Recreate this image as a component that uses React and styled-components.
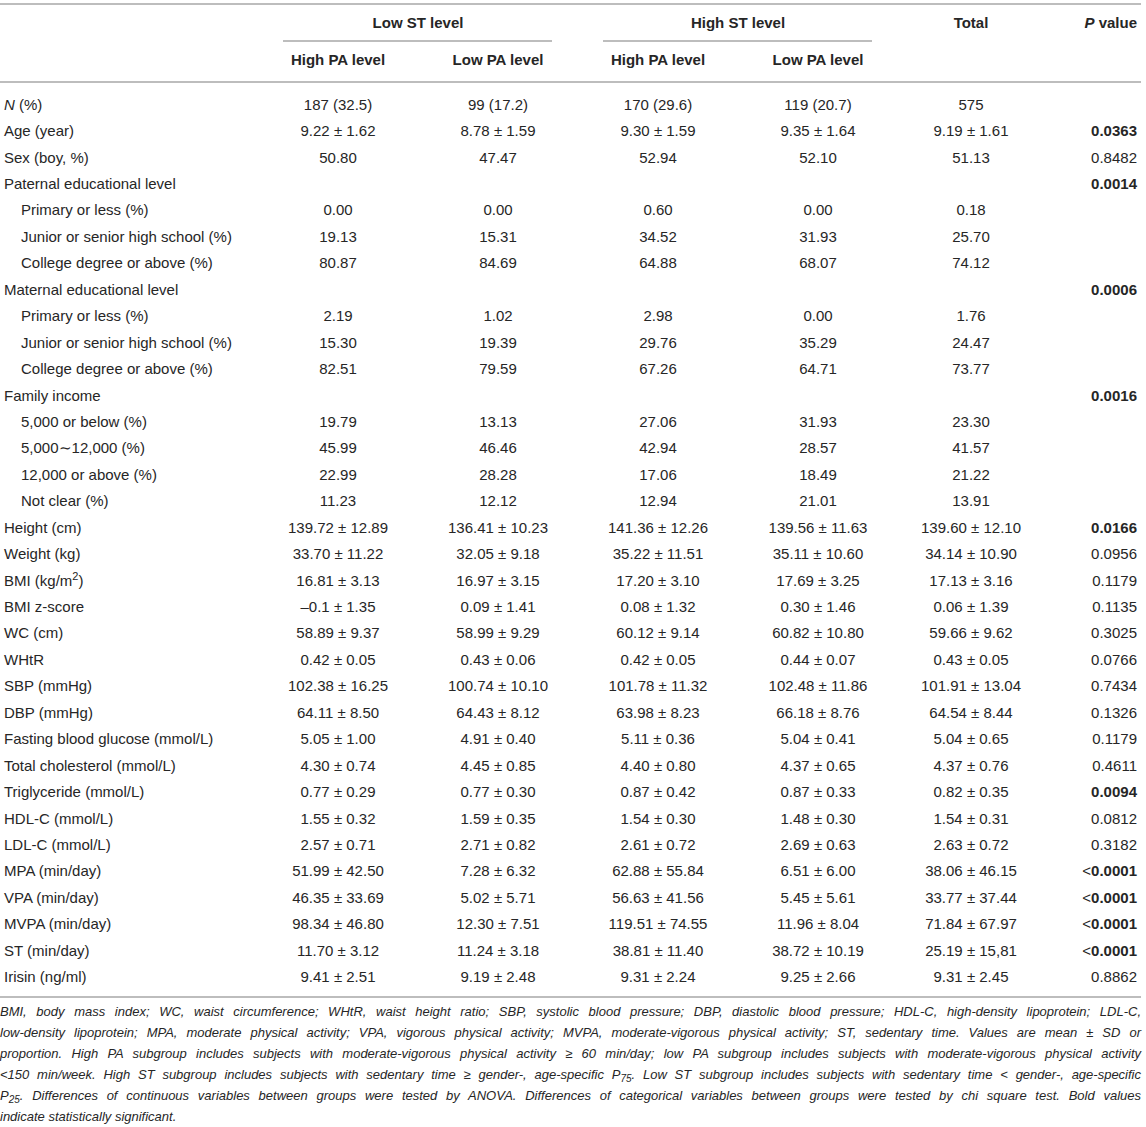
import React from 'react';
import styled, { createGlobalStyle } from 'styled-components';

const GlobalStyle = createGlobalStyle`
  body {
    margin: 0;
    background: #fff;
    color: #262626;
    font-family: "Liberation Sans", Arial, sans-serif;
  }
`;

const COLS = '258px 160px 160px 160px 160px 146px 97px';

const Page = styled.div`
  width: 1141px;
  padding-top: 3px;
`;

const Rule = styled.div`
  height: 2px;
  background: #bdbdbd;
`;

const Head = styled.div`
  display: grid;
  grid-template-columns: ${COLS};
  grid-template-rows: 35px 2px 39px;
  font-size: 15px;
  font-weight: bold;
`;

const GroupCell = styled.div`
  grid-column: ${(p) => p.$col} / span 2;
  grid-row: 1;
  display: flex;
  align-items: center;
  justify-content: center;
`;

const GroupLine = styled.div`
  grid-column: ${(p) => p.$col} / span 2;
  grid-row: 2;
  margin: 0 26px 0 25px;
  background: #bdbdbd;
`;

const SubHead = styled.div`
  grid-column: ${(p) => p.$col};
  grid-row: 3;
  padding-top: 10px;
  line-height: 16px;
  text-align: center;
`;

const TopHead = styled.div`
  grid-column: ${(p) => p.$col};
  grid-row: 1;
  display: flex;
  align-items: center;
  justify-content: ${(p) => (p.$right ? 'flex-end' : 'center')};
  padding-right: ${(p) => (p.$right ? '4px' : '0')};
`;

const Body = styled.div`
  padding: 8px 0 6px;
  font-size: 15px;
`;

const Row = styled.div`
  display: grid;
  grid-template-columns: ${COLS};
  height: 26.45px;
  align-items: center;
`;

const Label = styled.div`
  padding-left: ${(p) => (p.$indent ? '21px' : '4px')};
  white-space: nowrap;

  sup {
    font-size: 11px;
    line-height: 0;
  }
`;

const Cell = styled.div`
  text-align: center;
  white-space: nowrap;
`;

const PCell = styled.div`
  text-align: right;
  padding-right: 4px;
  white-space: nowrap;
  font-weight: ${(p) => (p.$bold ? 'bold' : 'normal')};
`;

const Lt = styled.span`
  font-weight: normal;
`;

const Notes = styled.div`
  padding-top: 3px;
  font-size: 13px;
  font-style: italic;
  line-height: 21px;
`;

const NoteLine = styled.div`
  height: 21px;
  text-align: justify;
  text-align-last: ${(p) => (p.$last ? 'left' : 'justify')};
  white-space: nowrap;

  sub {
    font-size: 10px;
    line-height: 0;
    vertical-align: -3px;
  }
`;

const pm = (a, b) => `${a} \u00b1 ${b}`;

const rows = [
  { label: <><i>N</i> (%)</>, vals: ['187 (32.5)', '99 (17.2)', '170 (29.6)', '119 (20.7)', '575'], p: '' },
  { label: 'Age (year)', vals: [pm('9.22', '1.62'), pm('8.78', '1.59'), pm('9.30', '1.59'), pm('9.35', '1.64'), pm('9.19', '1.61')], p: '0.0363', bold: true },
  { label: 'Sex (boy, %)', vals: ['50.80', '47.47', '52.94', '52.10', '51.13'], p: '0.8482' },
  { label: 'Paternal educational level', vals: ['', '', '', '', ''], p: '0.0014', bold: true },
  { label: 'Primary or less (%)', indent: true, vals: ['0.00', '0.00', '0.60', '0.00', '0.18'], p: '' },
  { label: 'Junior or senior high school (%)', indent: true, vals: ['19.13', '15.31', '34.52', '31.93', '25.70'], p: '' },
  { label: 'College degree or above (%)', indent: true, vals: ['80.87', '84.69', '64.88', '68.07', '74.12'], p: '' },
  { label: 'Maternal educational level', vals: ['', '', '', '', ''], p: '0.0006', bold: true },
  { label: 'Primary or less (%)', indent: true, vals: ['2.19', '1.02', '2.98', '0.00', '1.76'], p: '' },
  { label: 'Junior or senior high school (%)', indent: true, vals: ['15.30', '19.39', '29.76', '35.29', '24.47'], p: '' },
  { label: 'College degree or above (%)', indent: true, vals: ['82.51', '79.59', '67.26', '64.71', '73.77'], p: '' },
  { label: 'Family income', vals: ['', '', '', '', ''], p: '0.0016', bold: true },
  { label: '5,000 or below (%)', indent: true, vals: ['19.79', '13.13', '27.06', '31.93', '23.30'], p: '' },
  { label: '5,000\u223c12,000 (%)', indent: true, vals: ['45.99', '46.46', '42.94', '28.57', '41.57'], p: '' },
  { label: '12,000 or above (%)', indent: true, vals: ['22.99', '28.28', '17.06', '18.49', '21.22'], p: '' },
  { label: 'Not clear (%)', indent: true, vals: ['11.23', '12.12', '12.94', '21.01', '13.91'], p: '' },
  { label: 'Height (cm)', vals: [pm('139.72', '12.89'), pm('136.41', '10.23'), pm('141.36', '12.26'), pm('139.56', '11.63'), pm('139.60', '12.10')], p: '0.0166', bold: true },
  { label: 'Weight (kg)', vals: [pm('33.70', '11.22'), pm('32.05', '9.18'), pm('35.22', '11.51'), pm('35.11', '10.60'), pm('34.14', '10.90')], p: '0.0956' },
  { label: <>BMI (kg/m<sup>2</sup>)</>, vals: [pm('16.81', '3.13'), pm('16.97', '3.15'), pm('17.20', '3.10'), pm('17.69', '3.25'), pm('17.13', '3.16')], p: '0.1179' },
  { label: 'BMI z-score', vals: [pm('\u20130.1', '1.35'), pm('0.09', '1.41'), pm('0.08', '1.32'), pm('0.30', '1.46'), pm('0.06', '1.39')], p: '0.1135' },
  { label: 'WC (cm)', vals: [pm('58.89', '9.37'), pm('58.99', '9.29'), pm('60.12', '9.14'), pm('60.82', '10.80'), pm('59.66', '9.62')], p: '0.3025' },
  { label: 'WHtR', vals: [pm('0.42', '0.05'), pm('0.43', '0.06'), pm('0.42', '0.05'), pm('0.44', '0.07'), pm('0.43', '0.05')], p: '0.0766' },
  { label: 'SBP (mmHg)', vals: [pm('102.38', '16.25'), pm('100.74', '10.10'), pm('101.78', '11.32'), pm('102.48', '11.86'), pm('101.91', '13.04')], p: '0.7434' },
  { label: 'DBP (mmHg)', vals: [pm('64.11', '8.50'), pm('64.43', '8.12'), pm('63.98', '8.23'), pm('66.18', '8.76'), pm('64.54', '8.44')], p: '0.1326' },
  { label: 'Fasting blood glucose (mmol/L)', vals: [pm('5.05', '1.00'), pm('4.91', '0.40'), pm('5.11', '0.36'), pm('5.04', '0.41'), pm('5.04', '0.65')], p: '0.1179' },
  { label: 'Total cholesterol (mmol/L)', vals: [pm('4.30', '0.74'), pm('4.45', '0.85'), pm('4.40', '0.80'), pm('4.37', '0.65'), pm('4.37', '0.76')], p: '0.4611' },
  { label: 'Triglyceride (mmol/L)', vals: [pm('0.77', '0.29'), pm('0.77', '0.30'), pm('0.87', '0.42'), pm('0.87', '0.33'), pm('0.82', '0.35')], p: '0.0094', bold: true },
  { label: 'HDL-C (mmol/L)', vals: [pm('1.55', '0.32'), pm('1.59', '0.35'), pm('1.54', '0.30'), pm('1.48', '0.30'), pm('1.54', '0.31')], p: '0.0812' },
  { label: 'LDL-C (mmol/L)', vals: [pm('2.57', '0.71'), pm('2.71', '0.82'), pm('2.61', '0.72'), pm('2.69', '0.63'), pm('2.63', '0.72')], p: '0.3182' },
  { label: 'MPA (min/day)', vals: [pm('51.99', '42.50'), pm('7.28', '6.32'), pm('62.88', '55.84'), pm('6.51', '6.00'), pm('38.06', '46.15')], p: '0.0001', lt: true },
  { label: 'VPA (min/day)', vals: [pm('46.35', '33.69'), pm('5.02', '5.71'), pm('56.63', '41.56'), pm('5.45', '5.61'), pm('33.77', '37.44')], p: '0.0001', lt: true },
  { label: 'MVPA (min/day)', vals: [pm('98.34', '46.80'), pm('12.30', '7.51'), pm('119.51', '74.55'), pm('11.96', '8.04'), pm('71.84', '67.97')], p: '0.0001', lt: true },
  { label: 'ST (min/day)', vals: [pm('11.70', '3.12'), pm('11.24', '3.18'), pm('38.81', '11.40'), pm('38.72', '10.19'), pm('25.19', '15,81')], p: '0.0001', lt: true },
  { label: 'Irisin (ng/ml)', vals: [pm('9.41', '2.51'), pm('9.19', '2.48'), pm('9.31', '2.24'), pm('9.25', '2.66'), pm('9.31', '2.45')], p: '0.8862' },
];

const notes = [
  'BMI, body mass index; WC, waist circumference; WHtR, waist height ratio; SBP, systolic blood pressure; DBP, diastolic blood pressure; HDL-C, high-density lipoprotein; LDL-C,',
  'low-density lipoprotein; MPA, moderate physical activity; VPA, vigorous physical activity; MVPA, moderate-vigorous physical activity; ST, sedentary time. Values are mean \u00b1 SD or',
  'proportion. High PA subgroup includes subjects with moderate-vigorous physical activity \u2265 60 min/day; low PA subgroup includes subjects with moderate-vigorous physical activity',
  <>&lt;150 min/week. High ST subgroup includes subjects with sedentary time &ge; gender-, age-specific P<sub>75</sub>. Low ST subgroup includes subjects with sedentary time &lt; gender-, age-specific</>,
  <>P<sub>25</sub>. Differences of continuous variables between groups were tested by ANOVA. Differences of categorical variables between groups were tested by chi square test. Bold values</>,
  'indicate statistically significant.',
];

export default function App() {
  return (
    <Page>
      <GlobalStyle />
      <Rule />
      <Head>
        <GroupCell $col={2}>Low ST level</GroupCell>
        <GroupCell $col={4}>High ST level</GroupCell>
        <TopHead $col={6}>Total</TopHead>
        <TopHead $col={7} $right>
          <span><i>P</i> value</span>
        </TopHead>
        <GroupLine $col={2} />
        <GroupLine $col={4} />
        <SubHead $col={2}>High PA level</SubHead>
        <SubHead $col={3}>Low PA level</SubHead>
        <SubHead $col={4}>High PA level</SubHead>
        <SubHead $col={5}>Low PA level</SubHead>
      </Head>
      <Rule />
      <Body>
        {rows.map((r, i) => (
          <Row key={i}>
            <Label $indent={r.indent}>{r.label}</Label>
            {r.vals.map((v, j) => (
              <Cell key={j}>{v}</Cell>
            ))}
            <PCell $bold={r.bold || r.lt}>
              {r.lt ? <Lt>&lt;</Lt> : null}
              {r.p}
            </PCell>
          </Row>
        ))}
      </Body>
      <Rule />
      <Notes>
        {notes.map((n, i) => (
          <NoteLine key={i} $last={i === notes.length - 1}>{n}</NoteLine>
        ))}
      </Notes>
    </Page>
  );
}
